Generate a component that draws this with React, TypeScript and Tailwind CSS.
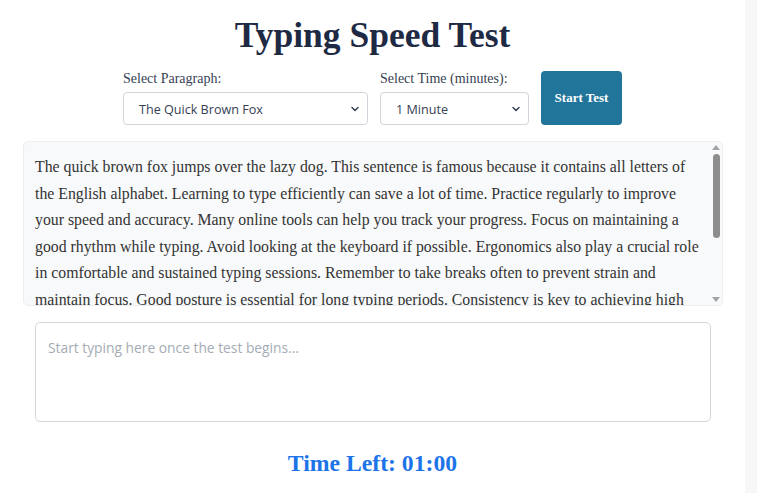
import { ChevronDown } from 'lucide-react';

// Lines broken where the reference breaks them
const LINES = [
  'The quick brown fox jumps over the lazy dog. This sentence is famous because it contains all letters of',
  'the English alphabet. Learning to type efficiently can save a lot of time. Practice regularly to improve',
  'your speed and accuracy. Many online tools can help you track your progress. Focus on maintaining a',
  'good rhythm while typing. Avoid looking at the keyboard if possible. Ergonomics also play a crucial role',
  'in comfortable and sustained typing sessions. Remember to take breaks often to prevent strain and',
  'maintain focus. Good posture is essential for long typing periods. Consistency is key to achieving high',
  'typing speeds over time.',
];

const serif = "font-['Liberation_Serif',Georgia,serif]";
const sans = "font-['Open_Sans','Noto_Sans',sans-serif]";

function Field({ label, value, width }: { label: string; value: string; width: string }) {
  return (
    <div className="flex flex-col">
      <label className={`${serif} text-[14px] text-gray-700 mb-[6px] leading-none`}>{label}</label>
      <div className={`${width} h-[33px] flex items-center justify-between border border-gray-300 rounded-[4px] bg-white pl-[15px] pr-[6px] pt-[3px]`}>
        <span className={`${sans} text-[12.6px] text-gray-700`}>{value}</span>
        <ChevronDown size={12} strokeWidth={3} className="text-gray-700 -mt-[3px]" />
      </div>
    </div>
  );
}

export default function App() {
  return (
    <div className="min-h-[493px] bg-[#f7f7f7] flex">
      <div className="w-[745px] bg-white flex flex-col items-center pt-[14px]">
        <h1 className={`${serif} text-[35.5px] font-bold text-[#1e2a44] leading-[42px]`}>Typing Speed Test</h1>

        <div className="flex items-end gap-[12px] mt-[15px]">
          <Field label="Select Paragraph:" value="The Quick Brown Fox" width="w-[245px]" />
          <Field label="Select Time (minutes):" value="1 Minute" width="w-[149px]" />
          <button className={`${serif} self-start w-[81px] h-[54px] bg-[#21759b] text-white text-[13px] font-semibold rounded-[4px]`}>
            Start Test
          </button>
        </div>

        <div className="w-[700px] h-[165px] mt-[16px] self-start ml-[23px] bg-[#f8f9fa] border border-[#eceef0] rounded-[5px] flex">
          <div className="flex-1 overflow-hidden pl-[11px] pt-[12px]">
            <p className={`${serif} text-[15.8px] leading-[26.5px] text-[#333]`}>
              {LINES.map((l) => (
                <span key={l} className="block whitespace-nowrap">{l}</span>
              ))}
            </p>
          </div>
          <div className="w-[10px] flex flex-col items-center py-[3px] mr-[1px]">
            <div className="w-0 h-0 border-l-[4px] border-r-[4px] border-b-[5px] border-l-transparent border-r-transparent border-b-[#a3a3a3]" />
            <div className="w-[7px] h-[84px] mt-[4px] rounded-full bg-[#8d8d8d]" />
            <div className="flex-1" />
            <div className="w-0 h-0 border-l-[4px] border-r-[4px] border-t-[5px] border-l-transparent border-r-transparent border-t-[#a3a3a3]" />
          </div>
        </div>

        <textarea
          placeholder="Start typing here once the test begins..."
          className={`${sans} w-[676px] h-[100px] mt-[16px] self-start ml-[35px] border border-[#d6d6d6] rounded-[5px] px-[12px] py-[15px] text-[13.8px] placeholder:text-[#a5acb5] resize-none outline-none`}
        />

        <div className={`${serif} text-[#1d74e8] text-[23.7px] font-bold mt-[24px]`}>Time Left: 01:00</div>
      </div>
    </div>
  );
}
